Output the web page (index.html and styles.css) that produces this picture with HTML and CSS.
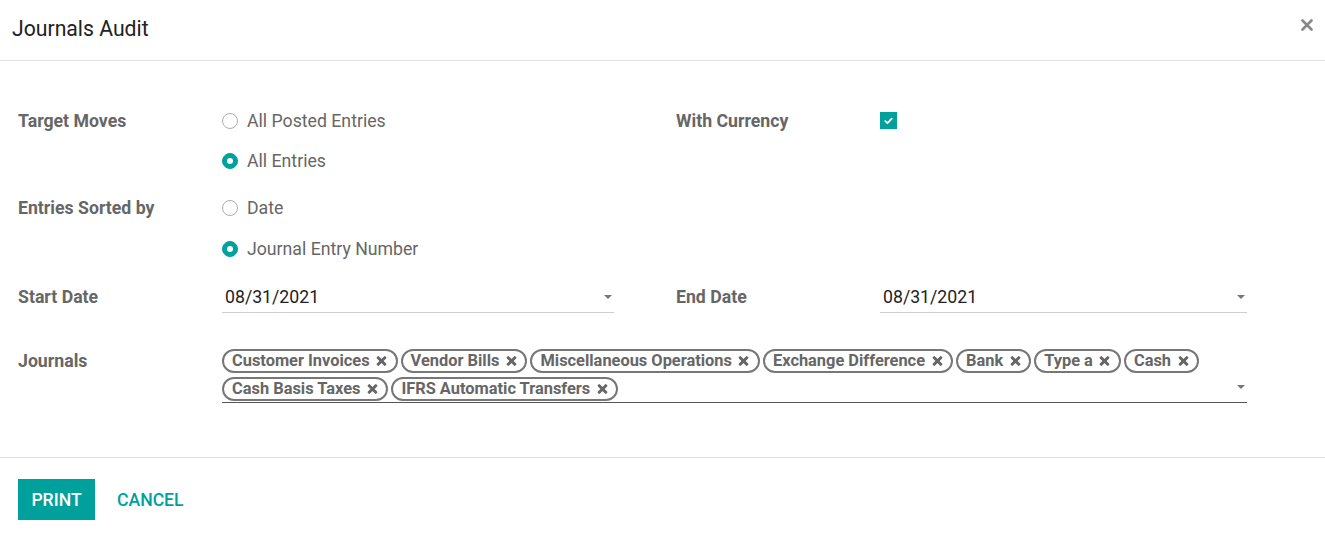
FILE: index.html
```html
<!DOCTYPE html>
<html>
<head>
<meta charset="utf-8">
<link rel="stylesheet" href="styles.css">
</head>
<body>
<div class="modal">
  <header class="modal-header">
    <h4 class="title">Journals Audit</h4>
    <button class="close" aria-label="Close">
      <svg width="12" height="12" viewBox="0 0 12 12"><path d="M1.5 1.5 L10.5 10.5 M10.5 1.5 L1.5 10.5" stroke="#888" stroke-width="2.6" stroke-linecap="round"/></svg>
    </button>
  </header>
  <main class="modal-body">
    <div class="grid">
      <div class="label row1">Target Moves</div>
      <div class="radios row1">
        <label class="radio"><span class="dot"></span>All Posted Entries</label>
        <label class="radio"><span class="dot on"></span>All Entries</label>
      </div>
      <div class="spacer row1"></div>
      <div class="label row1">With Currency</div>
      <div class="row1 check-cell"><span class="checkbox"><svg width="9" height="8" viewBox="0 0 9 8"><path d="M1.3 4.2 L3.5 6.2 L7.7 1.6" stroke="#fff" stroke-width="1.8" fill="none" stroke-linecap="round" stroke-linejoin="round"/></svg></span></div>

      <div class="label row2">Entries Sorted by</div>
      <div class="radios row2">
        <label class="radio"><span class="dot"></span>Date</label>
        <label class="radio"><span class="dot on"></span>Journal Entry Number</label>
      </div>
      <div class="row2 fill"></div>

      <div class="label row3 short">Start Date</div>
      <div class="row3 field"><span class="value">08/31/2021</span><span class="caret"></span></div>
      <div class="spacer row3"></div>
      <div class="label row3 short">End Date</div>
      <div class="row3 field"><span class="value">08/31/2021</span><span class="caret"></span></div>

      <div class="label row4 tagl">Journals</div>
      <div class="row4 tags">
        <span class="tag">Customer Invoices<i class="x"></i></span>
        <span class="tag">Vendor Bills<i class="x"></i></span>
        <span class="tag">Miscellaneous Operations<i class="x"></i></span>
        <span class="tag">Exchange Difference<i class="x"></i></span>
        <span class="tag">Bank<i class="x"></i></span>
        <span class="tag">Type a<i class="x"></i></span>
        <span class="tag">Cash<i class="x"></i></span>
        <span class="tag">Cash Basis Taxes<i class="x"></i></span>
        <span class="tag">IFRS Automatic Transfers<i class="x"></i></span>
        <span class="caret tagcaret"></span>
      </div>
    </div>
  </main>
  <footer class="modal-footer">
    <button class="btn primary">PRINT</button>
    <button class="btn link">CANCEL</button>
  </footer>
</div>
</body>
</html>
```
FILE: styles.css
```css
* { box-sizing: border-box; }
html, body { margin: 0; padding: 0; background: #fff; }
body { font-family: Roboto, "Liberation Sans", sans-serif; color: #666; font-size: 17.7px; }
.modal { width: 1325px; height: 543px; overflow: hidden; }
.modal-header {
  height: 61px;
  border-bottom: 1px solid #e2e2e2;
  display: flex;
  align-items: center;
  justify-content: space-between;
  padding: 0 12px 0 12px;
}
.title { margin: 0; font-weight: 400; font-size: 21.2px; color: #222; margin-top: -4px; }
.close { border: 0; background: none; padding: 0; display: flex; margin-top: -10px; }

.modal-body { padding: 40px 0 0 18px; height: 397px; border-bottom: 1px solid #e2e2e2; }
.grid {
  display: grid;
  grid-template-columns: 204px 392px 62px 204px 367px;
}
.label { font-weight: 700; color: #666; line-height: 40px; }
.label.short { line-height: 32px; }
.label.tagl { line-height: 28px; }
.radios { display: flex; flex-direction: column; }
.radio { display: flex; align-items: center; height: 40px; color: #666; }
.row2 .radio:last-child { height: 41px; padding-top: 1px; }
.dot {
  width: 16px; height: 16px; border-radius: 50%;
  border: 1px solid #adadad; margin-right: 9px; position: relative; flex: none;
}
.dot.on { background: #00a09d; border-color: #00a09d; }
.dot.on::after {
  content: ""; position: absolute; left: 4px; top: 4px; width: 6px; height: 6px;
  border-radius: 50%; background: #fff;
}
.check-cell { display: flex; align-items: center; height: 40px; }
.checkbox {
  width: 17px; height: 17px; background: #00a09d; display: flex;
  align-items: center; justify-content: center; margin-top: -1px;
}
.row2 { margin-top: 7px; }
.fill { grid-column: 3 / 6; }
.row3 { margin-top: 12px; }
.field {
  height: 32px; border-bottom: 1px solid #cfcfcf; display: flex; align-items: center;
  justify-content: space-between; padding: 0 2px 0 3px; color: #222;
}
.caret {
  width: 0; height: 0; border-left: 4px solid transparent; border-right: 4px solid transparent;
  border-top: 4px solid #777;
}
.row4 { margin-top: 34px; }
.tags {
  grid-column: 2 / 6;
  display: flex; flex-wrap: wrap; align-items: flex-start; align-content: flex-start;
  border-bottom: 1px solid #555; position: relative; height: 56px;
}
.tag {
  display: inline-flex; align-items: center; height: 24px; margin: 2px 3px 2px 0;
  border: 2px solid #777; border-radius: 12px; padding: 0 9px 0 8px;
  font-weight: 700; font-size: 16.4px; color: #666; line-height: 20px;
}
.x {
  display: inline-block; width: 10px; height: 10px; margin-left: 7px; position: relative;
}
.x::before, .x::after {
  content: ""; position: absolute; left: 3.5px; top: -1px; width: 3px; height: 12px; background: #666; border-radius: 1px;
}
.x::before { transform: rotate(45deg); }
.x::after { transform: rotate(-45deg); }
.tagcaret { position: absolute; right: 2px; top: 38px; }

.modal-footer { display: flex; align-items: center; padding: 21px 0 0 18px; }
.btn {
  font-family: Roboto, "Liberation Sans", sans-serif; font-size: 17.6px; font-weight: 500;
  border: 0; height: 41px; cursor: pointer;
}
.btn.primary { background: #00a09d; color: #fff; width: 77px; padding: 0; }
.btn.link { background: none; color: #00a09d; padding: 0 0 0 22px; }
```
